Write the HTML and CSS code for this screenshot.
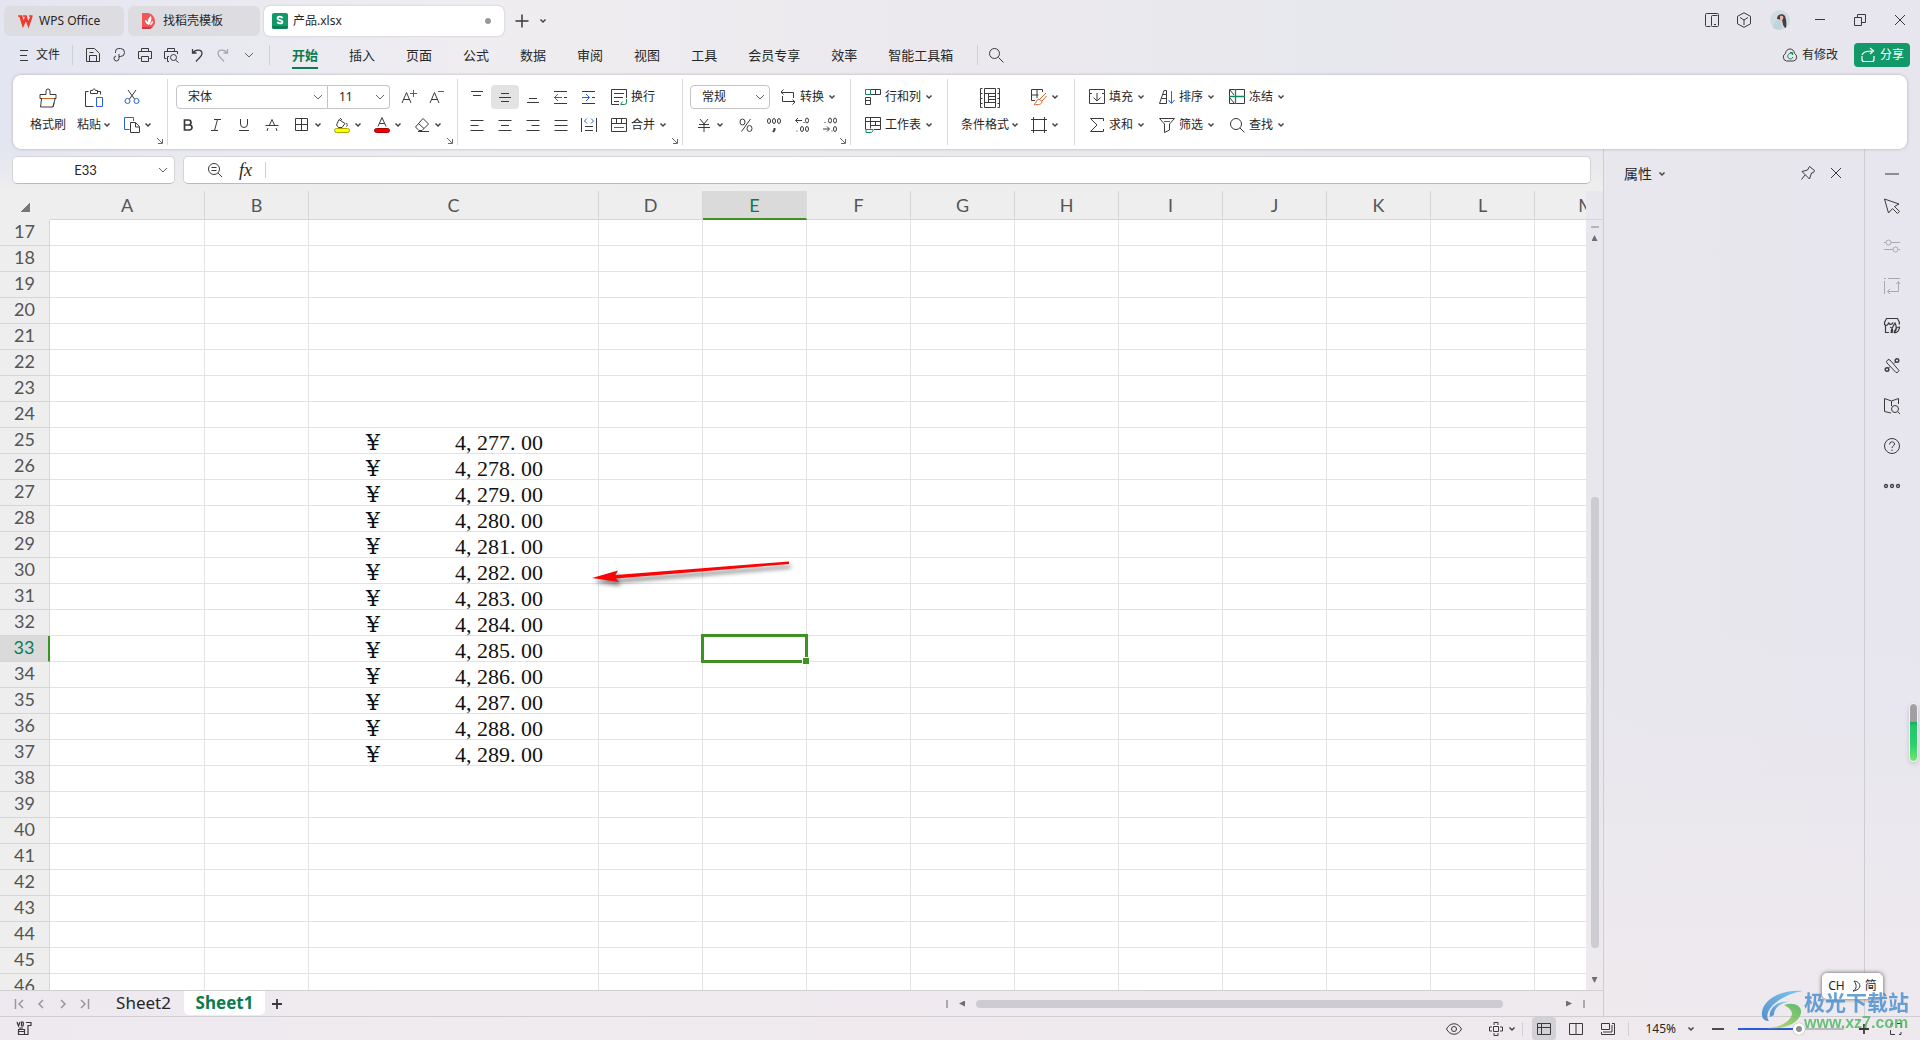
FILE: index.html
```html
<!DOCTYPE html>
<html lang="zh-CN">
<head>
<meta charset="utf-8">
<title>产品.xlsx - WPS Office</title>
<link rel="stylesheet" href="styles.css">
</head>
<body>
<svg width="0" height="0" class="defs" aria-hidden="true">
  <symbol id="chev" viewBox="0 0 8 8"><path d="M1.500 2.500 4 5l2.500-2.500" fill="none" stroke="currentColor" stroke-width="1.500"/></symbol>
  <symbol id="wide" viewBox="0 0 10 8"><path d="M1 2l4 4 4-4" fill="none" stroke="currentColor"/></symbol>
  <symbol id="corner" viewBox="0 0 8 8"><path d="M1 1l5 5M6.500 2v4.500H2" fill="none" stroke="currentColor"/></symbol>
</svg>

<header class="titlebar">
  <nav class="doc-tabs">
    <button class="doc-tab t1"><svg class="ic" viewBox="0 0 16 16"><path d="M1 3h3.500l2 7L9 3M6 3h3l2 7 3.500-7H12M3 3l3 10 3-7 2.500 7 3.500-10" stroke="#f03a2e" stroke-width="1.600"/></svg>WPS Office</button>
    <button class="doc-tab t2"><svg class="ic" viewBox="0 0 16 16"><path d="M1 0h6a8 8 0 0 1 7 8 7 7 0 0 1-7 8H1z" fill="#f25757" stroke="none"/><path d="M1 14h11l-3 2H1z" fill="#c93c42" stroke="none"/><path d="M8 12C5 11 4 9 4 7c2 0 3 2 4 5zM8 12C6 8 7 5 10 3c1 3 0 6-2 9zM9 12c1-3 2-4 3-4 0 2-1 4-3 4z" fill="#fff" stroke="none"/></svg>找稻壳模板</button>
    <button class="doc-tab active"><svg class="ic" viewBox="0 0 16 16"><rect width="16" height="16" rx="2" fill="#12996a" stroke="none"/><path d="M0 13h16v1a2 2 0 0 1-2 2H2a2 2 0 0 1-2-2z" fill="#0c7f56" stroke="none"/><path d="M10.500 5.200C9.500 3 5.500 3.200 5.500 5.300c0 2.300 5 1.200 5 3.500 0 2.200-4.200 2.200-5.200 0" stroke="#fff" stroke-width="1.800"/></svg>产品.xlsx<span class="unsaved"></span></button>
    <button class="icon-btn plus" aria-label="新建"><svg class="ic" viewBox="0 0 16 16"><path d="M8 1.500v13M1.500 8h13" stroke-width="1.500"/></svg></button>
    <button class="icon-btn tiny" aria-label="标签列表"><svg class="chev"><use href="#chev"/></svg></button>
  </nav>
  <div class="win-tools">
    <button class="icon-btn w32" aria-label="侧栏"><svg class="ic" viewBox="0 0 16 16"><path d="M6.500 14.500h-4a1 1 0 0 1-1-1v-11a1 1 0 0 1 1-1h11a1 1 0 0 1 1 1v11a1 1 0 0 1-1 1h-5a1 1 0 0 1-1-1v-9a1 1 0 0 1 1-1h5M10 12.500h2"/></svg></button>
    <button class="icon-btn w32" aria-label="应用"><svg class="ic" viewBox="0 0 16 16"><path d="M8 .8l6.500 3.500v7.500L8 15.300l-6.500-3.500V4.300zM4 5.500L8 8l4-2.500M8 8v5"/></svg></button>
    <button class="icon-btn w40" aria-label="账户"><svg class="avatar" viewBox="0 0 20 20"><circle cx="10" cy="10" r="10" fill="#cfdde2"/><path d="M3 18c0-6 4-9 8-8l1 9c-3 1-6 1-9-1z" fill="#bcd6da"/><path d="M7 9c0-5 6-6 8-3 1 3 2 7 1 12-3-1-3-4-4-8z" fill="#4a3c44"/><path d="M10 6c3-1 4 1 3 3-1 2-2 2-3 2z" fill="#e6b8a4"/></svg></button>
    <button class="icon-btn w40" aria-label="最小化"><svg class="ic" viewBox="0 0 16 16"><path d="M3 7.500h10"/></svg></button>
    <button class="icon-btn w40" aria-label="还原"><svg class="ic" viewBox="0 0 16 16"><path d="M2.500 5.500h7v8h-7zM5.500 5V2.500h8v8H10"/></svg></button>
    <button class="icon-btn w40" aria-label="关闭"><svg class="ic" viewBox="0 0 16 16"><path d="M3 3l10 10M13 3L3 13"/></svg></button>
  </div>
</header>

<div class="menubar">
  <button class="file-btn"><svg class="ic" viewBox="0 0 16 16"><path d="M4 3.500h8M4 8.500h7M4 13.500h8"/></svg>文件</button>
  <span class="vline v-file"></span>
  <div class="quick">
    <button class="icon-btn" aria-label="保存"><svg class="ic" viewBox="0 0 16 16"><path d="M1.500 14.500v-13h8l5 5v8zM4.500 14v-5.500h7V14M4.500 5.500h4"/></svg></button>
    <button class="icon-btn" aria-label="输出为PDF"><svg class="ic" viewBox="0 0 16 16"><path d="M4.500 6V4.500a3 3 0 0 1 3-3h2a4 4 0 0 1 0 8H8M8 7v4.500a2.500 2.500 0 1 1-3-2.500"/></svg></button>
    <button class="icon-btn" aria-label="打印"><svg class="ic" viewBox="0 0 16 16"><path d="M3.500 11.500h-2v-7h13v7h-2M4.500 4V1.500h7V4M4.500 9.500h7v5h-7z"/></svg></button>
    <button class="icon-btn" aria-label="打印预览"><svg class="ic" viewBox="0 0 16 16"><path d="M3.500 11.500h-2v-7h13V7M4.500 4V1.500h7V4M6 14.500H4.500v-5H6M12.500 13l3 2.500"/><circle cx="10.500" cy="10.500" r="3"/></svg></button>
    <button class="icon-btn" aria-label="撤销"><svg class="ic" viewBox="0 0 16 16"><path d="M3.500 2v4h4M4 6c2-4 9-4 9 .5 0 3-3 4-6 8" stroke-width="1.300"/></svg></button>
    <button class="icon-btn dim" aria-label="恢复"><svg class="ic" viewBox="0 0 16 16"><path d="M12.500 2v4h-4M12 6C10 2 3 2 3 6.500c0 3 3 4 6 8" stroke-width="1.300"/></svg></button>
    <button class="icon-btn" aria-label="更多"><svg class="wide"><use href="#wide"/></svg></button>
  </div>
  <span class="vline v-menu"></span>
  <nav class="menus">
    <a href="#" class="on">开始</a><a href="#">插入</a><a href="#">页面</a><a href="#">公式</a><a href="#">数据</a><a href="#">审阅</a><a href="#">视图</a><a href="#">工具</a><a href="#">会员专享</a><a href="#">效率</a><a href="#">智能工具箱</a>
  </nav>
  <span class="vline v-search"></span>
  <button class="icon-btn find" aria-label="搜索"><svg class="ic" viewBox="0 0 16 16"><circle cx="6.500" cy="6.500" r="5"/><path d="M10.500 10.500l5 5"/></svg></button>
  <div class="doc-state">
    <button class="changed"><svg class="ic" viewBox="0 0 16 16"><path d="M4.500 14a4 4 0 0 1-1-7.500C4 .5 12 .5 12.500 6.500a4 4 0 0 1-1 7.500z"/><path d="M10.500 7.500A2.700 2.700 0 1 0 11 10M8 5.500h2.500V8" stroke="#0e8a5c"/></svg>有修改</button>
    <button class="share"><svg class="ic" viewBox="0 0 16 16"><path d="M2 9v3.500a2 2 0 0 0 2 2h8a2 2 0 0 0 2-2V9M2 8c1-3 4-4 10-4M10 1l3.500 3L10 7" stroke="#fff" stroke-width="1.200"/></svg>分享</button>
  </div>
</div>

<section class="ribbon">
  <div class="group g-clip">
    <button class="big"><svg class="ic x20" viewBox="0 0 20 20"><path d="M8 6.500V3a2 2 0 0 1 4 0v3.500h6v4H2v-4zM3.500 11l-1 8h12.500l2-8M15 19l1-4"/><path d="M4 10.500h12" stroke="#d9652b"/></svg><span>格式刷</span></button>
    <button class="big"><svg class="ic x20" viewBox="0 0 20 20"><path d="M4.500 3.500H1.500v15h8M13.500 3.500h3v3M6.500 5.500v-3h2c0-2 3-2 3 0h2v3z"/><path d="M12.500 9.500h6v9h-6z" stroke="#2c5fdc"/></svg><span>粘贴<svg class="chev"><use href="#chev"/></svg></span></button>
    <div class="rows">
      <div class="row"><button class="pick" aria-label="剪切"><svg class="ic" viewBox="0 0 16 16"><path d="M4 1l6.500 9M12 1L5.500 10"/><g stroke="#2c5fdc"><circle cx="3.500" cy="12" r="2.500"/><circle cx="12.500" cy="12" r="2.500"/></g></svg></button></div>
      <div class="row"><button class="pick" aria-label="复制"><svg class="ic" viewBox="0 0 16 16"><path d="M9.500 4V.5h-9v12h5" stroke="#2c5fdc"/><path d="M6.500 5.500h5l4 4v6h-9zM11.500 6v4h4"/></svg><svg class="chev"><use href="#chev"/></svg></button></div>
    </div>
    <svg class="launch"><use href="#corner"/></svg>
  </div>

  <div class="group g-font">
    <div class="rows">
      <div class="row r-combo">
        <label class="combo c-font"><select aria-label="字体"><option>宋体</option></select><svg class="wide"><use href="#wide"/></svg></label>
        <label class="combo c-size"><select aria-label="字号"><option>11</option></select><svg class="wide"><use href="#wide"/></svg></label>
        <button class="icon-btn w28 grow" aria-label="增大字号"><svg class="ic" viewBox="0 0 16 16"><path d="M1 14L5.500 3.500 10 14M2.500 10.500h6"/><path d="M12.500 1v7M9 4.500h7" stroke="#2c5fdc"/></svg></button>
        <button class="icon-btn w28" aria-label="减小字号"><svg class="ic" viewBox="0 0 16 16"><path d="M1 14L5.500 3.500 10 14M2.500 10.500h6"/><path d="M9 2.500h6" stroke="#2c5fdc"/></svg></button>
      </div>
      <div class="row">
        <button class="icon-btn w28" aria-label="加粗"><svg class="ic" viewBox="0 0 16 16"><path d="M4.500 3h4a2.400 2.400 0 0 1 0 5h-4zM4.500 8h5a2.500 2.500 0 0 1 0 5h-5z" stroke-width="1.700"/></svg></button>
        <button class="icon-btn w28" aria-label="倾斜"><svg class="ic" viewBox="0 0 16 16"><path d="M6 2.500h7M3 13.500h7M9.500 2.500l-3 11"/></svg></button>
        <button class="icon-btn w28" aria-label="下划线"><svg class="ic" viewBox="0 0 16 16"><path d="M4.500 2v5a3.500 3.500 0 0 0 7 0V2M3 13.500h10"/></svg></button>
        <button class="icon-btn w28" aria-label="删除线"><svg class="ic" viewBox="0 0 16 16"><path d="M1.500 8.500h13M5.500 8L8 2.500 10.500 8M4 11l-1 3M12 11l1 3"/></svg></button>
        <button class="pick" aria-label="边框"><svg class="ic" viewBox="0 0 16 16"><path d="M1.500 1.500h12v12h-12zM7.500 1.500v12M1.500 7.500h12"/></svg><svg class="chev"><use href="#chev"/></svg></button>
        <button class="pick" aria-label="填充颜色"><svg class="ic" viewBox="0 0 16 16"><path d="M5 2.500l6 4-3 4H4.500l-2-2.500zM6 1l2 2M12.500 6c1 2 1 3 0 3.500"/><rect x=".5" y="11.500" width="15" height="4" rx="2" fill="#ffff00" stroke="#a8a800"/></svg><svg class="chev"><use href="#chev"/></svg></button>
        <button class="pick" aria-label="字体颜色"><svg class="ic" viewBox="0 0 16 16"><path d="M4 9.500L8 .5l4 9M5.500 6.500h5"/><rect x=".5" y="11.500" width="15" height="4" rx="2" fill="#f00000" stroke="#b00000"/></svg><svg class="chev"><use href="#chev"/></svg></button>
        <button class="pick" aria-label="清除"><svg class="ic" viewBox="0 0 16 16"><path d="M9 1.500l5.500 5.500-6.500 6.500H5L1.500 10zM4.500 6.500l5.500 5M4 14.500h11"/></svg><svg class="chev"><use href="#chev"/></svg></button>
      </div>
    </div>
    <svg class="launch"><use href="#corner"/></svg>
  </div>

  <div class="group g-align">
    <div class="rows">
      <div class="row">
        <button class="icon-btn w28" aria-label="顶端对齐"><svg class="ic" viewBox="0 0 16 16"><path d="M2 2.500h12M4 6.500h8"/></svg></button>
        <button class="icon-btn w28 pressed" aria-label="垂直居中"><svg class="ic" viewBox="0 0 16 16"><path d="M4 4.500h8M2 8.500h12M4 12.500h8"/></svg></button>
        <button class="icon-btn w28" aria-label="底端对齐"><svg class="ic" viewBox="0 0 16 16"><path d="M4 9.500h8M2 13.500h12"/></svg></button>
        <button class="icon-btn w28" aria-label="减少缩进"><svg class="ic" viewBox="0 0 16 16"><path d="M1 2.500h13M1 14.500h13M11 8.500h3"/><path d="M9 8.500H1.500M5 5L1.500 8.500 5 12" stroke="#2c5fdc"/></svg></button>
        <button class="icon-btn w28" aria-label="增加缩进"><svg class="ic" viewBox="0 0 16 16"><path d="M1 2.500h13M1 14.500h13M11 8.500h3"/><path d="M1 8.500h7.500M5 5l3.500 3.500L5 12" stroke="#2c5fdc"/></svg></button>
        <button class="cmd"><svg class="ic" viewBox="0 0 16 16"><path d="M8 15.500H.5V.5h15V9M3 4.500h10M3 8.500h9M3 12.500h5"/><path d="M15.500 10v3.500a2 2 0 0 1-2 2H10M11.500 12.500l-2 3" stroke="#0e8a5c"/></svg>换行</button>
      </div>
      <div class="row">
        <button class="icon-btn w28" aria-label="左对齐"><svg class="ic" viewBox="0 0 16 16"><path d="M1.500 3.500h13M1.500 8.500h8M1.500 13.500h13"/></svg></button>
        <button class="icon-btn w28" aria-label="水平居中"><svg class="ic" viewBox="0 0 16 16"><path d="M1.500 3.500h13M4 8.500h8M1.500 13.500h13"/></svg></button>
        <button class="icon-btn w28" aria-label="右对齐"><svg class="ic" viewBox="0 0 16 16"><path d="M1.500 3.500h13M6.500 8.500h8M1.500 13.500h13"/></svg></button>
        <button class="icon-btn w28" aria-label="两端对齐"><svg class="ic" viewBox="0 0 16 16"><path d="M1.500 3.500h13M1.500 8.500h13M1.500 13.500h13"/></svg></button>
        <button class="icon-btn w28" aria-label="分散对齐"><svg class="ic" viewBox="0 0 16 16"><path d="M.5 1v14M15.500 1v14M4 9.500h8M4 13.500h8"/><path d="M6 1.500L3.500 4 6 6.500M10 1.500L12.500 4 10 6.500" stroke="#2c5fdc"/></svg></button>
        <button class="cmd"><svg class="ic" viewBox="0 0 16 16"><path d="M.5 1.500h15v13H.5zM.5 6.500h15M5.500 1.500v5M10.500 1.500v5"/><path d="M3 10.500h10" stroke="#0e8a5c"/></svg>合并<svg class="chev"><use href="#chev"/></svg></button>
      </div>
    </div>
    <svg class="launch"><use href="#corner"/></svg>
  </div>

  <div class="group g-num">
    <div class="rows">
      <div class="row r-num">
        <label class="combo c-fmt"><select aria-label="数字格式"><option>常规</option></select><svg class="wide"><use href="#wide"/></svg></label>
        <button class="cmd conv"><svg class="ic" viewBox="0 0 16 16"><path d="M3.500 .5L1 3l2.500 2.500M1 3.500h12.500V9M12.500 10.500L15 13l-2.500 2.500M15 12.500H2.500V7"/></svg>转换<svg class="chev"><use href="#chev"/></svg></button>
      </div>
      <div class="row">
        <button class="pick" aria-label="货币"><svg class="ic" viewBox="0 0 16 16"><path d="M4 2l4 5 4-5M3 7.500h10M2 10.500h12M8 7v8"/></svg><svg class="chev"><use href="#chev"/></svg></button>
        <button class="icon-btn w28 pct" aria-label="百分比"><svg class="ic" viewBox="0 0 16 16"><path d="M12.500 2l-9 12.500"/><ellipse cx="4.500" cy="5" rx="2.500" ry="3"/><ellipse cx="11.500" cy="11.500" rx="2.500" ry="3"/></svg></button>
        <button class="icon-btn w28" aria-label="千位分隔"><svg class="ic" viewBox="0 0 16 16"><ellipse cx="3" cy="4" rx="1.500" ry="2.500"/><ellipse cx="8" cy="4" rx="1.500" ry="2.500"/><ellipse cx="13" cy="4" rx="1.500" ry="2.500"/><path d="M8.500 11v2l-1.500 2" stroke-width="2"/></svg></button>
        <button class="icon-btn w28" aria-label="增加小数位"><svg class="ic" viewBox="0 0 16 16"><path d="M8 3.500H2M4 1L1.500 3.500 4 6M9.500 5.500h1M2.500 14h1"/><ellipse cx="13" cy="3.500" rx="1.500" ry="2.500"/><ellipse cx="8" cy="12" rx="1.500" ry="2.500"/><ellipse cx="13" cy="12" rx="1.500" ry="2.500"/></svg></button>
        <button class="icon-btn w28" aria-label="减少小数位"><svg class="ic" viewBox="0 0 16 16"><path d="M1 12h6M5 9.500L7.500 12 5 14.500M9.500 14h1M2.500 5.500h1"/><ellipse cx="13" cy="12" rx="1.500" ry="2.500"/><ellipse cx="8" cy="3.500" rx="1.500" ry="2.500"/><ellipse cx="13" cy="3.500" rx="1.500" ry="2.500"/></svg></button>
      </div>
    </div>
    <svg class="launch"><use href="#corner"/></svg>
  </div>

  <div class="group g-rc">
    <div class="rows">
      <div class="row"><button class="cmd"><svg class="ic" viewBox="0 0 16 16"><path d="M5.500 .5h10v5h-10M10.500 .5v5M5.500 8.500v7h-5v-7zM.5 11.500h5"/><path d="M.5 .5h5v5h-5z" stroke="#0e8a5c"/></svg>行和列<svg class="chev"><use href="#chev"/></svg></button></div>
      <div class="row"><button class="cmd"><svg class="ic" viewBox="0 0 16 16"><path d="M9 12.500h6.500V.5H.5v12M.5 4.500h15M5.500 .5v11M10.500 4.500V8M5.500 8.500h10"/><path d="M1 12.500h7c0 2-1 3-3 3H1z" stroke="#0e8a5c"/></svg>工作表<svg class="chev"><use href="#chev"/></svg></button></div>
    </div>
  </div>

  <div class="group g-cond">
    <button class="big"><svg class="ic x20" viewBox="0 0 20 20"><path d="M2.500 .5H.5v19h2M17.500 .5h2v19h-2M4.500 .5v19M15.500 .5v19M4.500 .5h11M4.500 5.500h11M4.500 14.500h11M4.500 19.500h11M8.500 8.500h7M8.500 11.500h7M8.500 5.500v9M.5 5.500h2M.5 10.500h2M.5 15.500h2M17.500 5.500h2M17.500 10.500h2M17.500 15.500h2"/></svg><span>条件格式<svg class="chev"><use href="#chev"/></svg></span></button>
    <div class="rows">
      <div class="row"><button class="pick" aria-label="表格样式"><svg class="ic" viewBox="0 0 16 16"><path d="M4 11.500H.5V.5h11V3M.5 6h7M6 .5V9"/><path d="M15 4L9 10M15.500 7L11 12M8 10c-3 0-2 4-5 5.500 4 .5 8 0 8-3z" stroke="#d9652b"/></svg><svg class="chev"><use href="#chev"/></svg></button></div>
      <div class="row"><button class="pick" aria-label="单元格"><svg class="ic" viewBox="0 0 16 16"><path d="M2.500 0v16M13.500 0v16M0 2.500h16M0 13.500h16"/></svg><svg class="chev"><use href="#chev"/></svg></button></div>
    </div>
  </div>

  <div class="group g-edit">
    <div class="rows">
      <div class="row">
        <button class="cmd w70"><svg class="ic" viewBox="0 0 16 16"><path d="M3 4.500H.5v-4h15v4H13M.5 4.500v10h15v-10M8 4v8M4.500 8.500L8 12l3.500-3.500"/></svg>填充<svg class="chev"><use href="#chev"/></svg></button>
        <button class="cmd w70"><svg class="ic" viewBox="0 0 16 16"><path d="M.5 14.500L5 1.500h2.500v13zM4 5.500h3.500M2.500 9.500h5"/><path d="M12.500 2v12M9.500 11l3 3.500 3-3.500" stroke="#2c5fdc"/></svg>排序<svg class="chev"><use href="#chev"/></svg></button>
        <button class="cmd w70"><svg class="ic" viewBox="0 0 16 16"><path d="M.5 .5h15v14H.5zM1 1l4 5M1 9l4 5"/><path d="M0 7.500h16M6.500 0v15" stroke="#0e8a5c" stroke-width="1.300"/></svg>冻结<svg class="chev"><use href="#chev"/></svg></button>
      </div>
      <div class="row">
        <button class="cmd w70"><svg class="ic" viewBox="0 0 16 16"><path d="M14.500 4V1.500h-13L8 8l-6.500 6.500h13V12"/></svg>求和<svg class="chev"><use href="#chev"/></svg></button>
        <button class="cmd w70"><svg class="ic" viewBox="0 0 16 16"><path d="M.5 1.500h15L10.500 7v6l-5 2.500V7z"/><path d="M5 4.500h6" stroke="#0e8a5c"/></svg>筛选<svg class="chev"><use href="#chev"/></svg></button>
        <button class="cmd w70"><svg class="ic" viewBox="0 0 16 16"><circle cx="7" cy="7" r="5.500"/><path d="M11 11l4.500 4.500"/></svg>查找<svg class="chev"><use href="#chev"/></svg></button>
      </div>
    </div>
  </div>
</section>

<main class="body">
  <section class="work">
    <div class="formula">
      <div class="name-box"><input aria-label="名称框" value="E33"><svg class="wide"><use href="#wide"/></svg></div>
      <div class="fx-box">
        <svg class="ic" viewBox="0 0 16 16"><circle cx="7" cy="7" r="5.500"/><path d="M11 11l4 4M4.500 5.500h5M4.500 8.500h5"/></svg>
        <span class="fx">fx</span>
        <input aria-label="编辑栏">
      </div>
    </div>
    <div class="sheet-area">
      <div class="grid-wrap">
        <table class="grid">
          <colgroup><col class="c-head"><col class="c-a"><col class="c-b"><col class="c-c"><col class="c-n" span="10"></colgroup>
          <thead><tr><th><span class="all"></span></th><th>A</th><th>B</th><th>C</th><th>D</th><th class="sel">E</th><th>F</th><th>G</th><th>H</th><th>I</th><th>J</th><th>K</th><th>L</th><th>M</th></tr></thead>
          <tbody>
<tr><th>17<td><td><td><td><td><td><td><td><td><td><td><td><td>
<tr><th>18<td><td><td><td><td><td><td><td><td><td><td><td><td>
<tr><th>19<td><td><td><td><td><td><td><td><td><td><td><td><td>
<tr><th>20<td><td><td><td><td><td><td><td><td><td><td><td><td>
<tr><th>21<td><td><td><td><td><td><td><td><td><td><td><td><td>
<tr><th>22<td><td><td><td><td><td><td><td><td><td><td><td><td>
<tr><th>23<td><td><td><td><td><td><td><td><td><td><td><td><td>
<tr><th>24<td><td><td><td><td><td><td><td><td><td><td><td><td>
<tr><th>25<td><td><td><div class="money"><b>¥</b><span>4<i>,</i>277<i>.</i>00</span></div><td><td><td><td><td><td><td><td><td><td>
<tr><th>26<td><td><td><div class="money"><b>¥</b><span>4<i>,</i>278<i>.</i>00</span></div><td><td><td><td><td><td><td><td><td><td>
<tr><th>27<td><td><td><div class="money"><b>¥</b><span>4<i>,</i>279<i>.</i>00</span></div><td><td><td><td><td><td><td><td><td><td>
<tr><th>28<td><td><td><div class="money"><b>¥</b><span>4<i>,</i>280<i>.</i>00</span></div><td><td><td><td><td><td><td><td><td><td>
<tr><th>29<td><td><td><div class="money"><b>¥</b><span>4<i>,</i>281<i>.</i>00</span></div><td><td><td><td><td><td><td><td><td><td>
<tr><th>30<td><td><td><div class="money"><b>¥</b><span>4<i>,</i>282<i>.</i>00</span></div><td><td><td><td><td><td><td><td><td><td>
<tr><th>31<td><td><td><div class="money"><b>¥</b><span>4<i>,</i>283<i>.</i>00</span></div><td><td><td><td><td><td><td><td><td><td>
<tr><th>32<td><td><td><div class="money"><b>¥</b><span>4<i>,</i>284<i>.</i>00</span></div><td><td><td><td><td><td><td><td><td><td>
<tr><th class="sel">33<td><td><td><div class="money"><b>¥</b><span>4<i>,</i>285<i>.</i>00</span></div><td><td class="cursor"><td><td><td><td><td><td><td><td>
<tr><th>34<td><td><td><div class="money"><b>¥</b><span>4<i>,</i>286<i>.</i>00</span></div><td><td><td><td><td><td><td><td><td><td>
<tr><th>35<td><td><td><div class="money"><b>¥</b><span>4<i>,</i>287<i>.</i>00</span></div><td><td><td><td><td><td><td><td><td><td>
<tr><th>36<td><td><td><div class="money"><b>¥</b><span>4<i>,</i>288<i>.</i>00</span></div><td><td><td><td><td><td><td><td><td><td>
<tr><th>37<td><td><td><div class="money"><b>¥</b><span>4<i>,</i>289<i>.</i>00</span></div><td><td><td><td><td><td><td><td><td><td>
<tr><th>38<td><td><td><td><td><td><td><td><td><td><td><td><td>
<tr><th>39<td><td><td><td><td><td><td><td><td><td><td><td><td>
<tr><th>40<td><td><td><td><td><td><td><td><td><td><td><td><td>
<tr><th>41<td><td><td><td><td><td><td><td><td><td><td><td><td>
<tr><th>42<td><td><td><td><td><td><td><td><td><td><td><td><td>
<tr><th>43<td><td><td><td><td><td><td><td><td><td><td><td><td>
<tr><th>44<td><td><td><td><td><td><td><td><td><td><td><td><td>
<tr><th>45<td><td><td><td><td><td><td><td><td><td><td><td><td>
<tr><th>46<td><td><td><td><td><td><td><td><td><td><td><td><td>
          </tbody>
        </table>
        <svg class="arrow" viewBox="0 0 210 50"><path d="M2 28L28 20.500 25.500 25 199 11.500V14L26 28.500 29 32z" fill="#fa0505"/></svg>
      </div>
      <div class="vscroll"><span class="split-h"></span><span class="tri up"></span><span class="v-thumb"></span><span class="tri down"></span></div>
    </div>
    <div class="sheet-bar">
      <div class="nav">
        <button aria-label="第一个"><svg class="ic" viewBox="0 0 16 16"><path d="M4.500 3v10M12 4L8 8l4 4" stroke-width="1.500"/></svg></button>
        <button aria-label="上一个"><svg class="ic" viewBox="0 0 16 16"><path d="M10 4L6 8l4 4" stroke-width="1.500"/></svg></button>
        <button aria-label="下一个"><svg class="ic" viewBox="0 0 16 16"><path d="M6 4l4 4-4 4" stroke-width="1.500"/></svg></button>
        <button aria-label="最后一个"><svg class="ic" viewBox="0 0 16 16"><path d="M11.500 3v10M4 4l4 4-4 4" stroke-width="1.500"/></svg></button>
      </div>
      <button class="sheet">Sheet2</button>
      <button class="sheet current">Sheet1</button>
      <button class="add" aria-label="新建工作表"><svg class="ic" viewBox="0 0 16 16"><path d="M8 3v10M3 8h10" stroke-width="1.800"/></svg></button>
      <div class="hscroll"><span class="split-v"></span><span class="tri left"></span><span class="h-track"><span class="h-thumb"></span></span><span class="tri right"></span><span class="split-v"></span></div>
    </div>
  </section>

  <aside class="props">
    <div class="props-head"><button class="props-title">属性<svg class="chev"><use href="#chev"/></svg></button>
      <button class="icon-btn w28" aria-label="固定"><svg class="ic" viewBox="0 0 16 16"><path d="M9.500 1.500l5 4-1 2-2 .5-2 6-7.500-7.500 5.500-1.500zM5 10l-3.500 4.500"/></svg></button>
      <button class="icon-btn w28" aria-label="关闭属性"><svg class="ic" viewBox="0 0 16 16"><path d="M3 3l10 10M13 3L3 13"/></svg></button>
    </div>
  </aside>

  <aside class="rail">
    <span class="rail-dash"></span>
    <button aria-label="选择"><svg class="ic" viewBox="0 0 16 16"><path d="M.5 1l14.500 5-4.500 2.500 5 5-2 2-5-5L4.500 15z"/></svg></button>
    <button class="dim" aria-label="设置"><svg class="ic" viewBox="0 0 16 16"><path d="M0 4.500h2M7 4.500h9M0 11.500h9M14 11.500h2"/><circle cx="4.500" cy="4.500" r="2.500"/><circle cx="11.500" cy="11.500" r="2.500"/></svg></button>
    <button class="dim" aria-label="转换"><svg class="ic" viewBox="0 0 16 16"><path d="M0 .5h2M4 .5h12M.5 3v13M14.500 4v9.500h-11M12 6l2.500-2.500L16 6M6 11l-2.500 2.500L6 16"/></svg></button>
    <button aria-label="素材"><svg class="ic" viewBox="0 0 16 16"><path d="M1.500 7v7.500H5M15 6.500l.5-2L13.500.5h-11l-2 4v2c2 2 4 0 4-2 1 3 4 2 4.500 0M6 9c3 1 3 4 2 6M7 15c0-5 3-8 4-10 2 4 1 8-1 10M10 15c1-4 3-6 5.500-6 0 3-2 6-5.500 6" stroke-width="1.200"/></svg></button>
    <button aria-label="工具"><svg class="ic" viewBox="0 0 16 16"><path d="M2.500 3.500l1.500-2 2 .5 9 10.500-1.500 2H12L3 5z"/><circle cx="13" cy="2.500" r="1.800" stroke-width="1.400"/><circle cx="3" cy="11.500" r="1.800" stroke-width="1.400"/><path d="M10 5.500l1.500-1.500M4.500 10L6 8.500"/></svg></button>
    <button aria-label="查阅"><svg class="ic" viewBox="0 0 16 16"><path d="M7 15l-6.500-1.500V.5L7.500 3l7-2.500V6M7.500 3v5M14 14l2 2"/><circle cx="11" cy="11" r="3.500"/></svg></button>
    <button aria-label="帮助"><svg class="ic" viewBox="0 0 16 16"><circle cx="8" cy="8" r="7.500"/><path d="M5.500 6.500c0-3.500 5-3.500 5-.5 0 2-2.500 2-2.500 4M8 11.500v1.500"/></svg></button>
    <button aria-label="更多"><svg class="ic" viewBox="0 0 16 16"><g stroke-width="1.300"><circle cx="2" cy="8" r="1.500"/><circle cx="8" cy="8" r="1.500"/><circle cx="14" cy="8" r="1.500"/></g></svg></button>
  </aside>
</main>

<footer class="status">
  <button class="icon-btn vbt" aria-label="宏"><svg class="ic" viewBox="0 0 16 16"><path d="M1 1l1.500 4L4 1M5.500 1v4H7L7.500 3 7 1zM10 1.500h5v3h-3v9H2.500V8.500h6v5M3 10.500h5M4 8.500V7h3" stroke-width="1.200"/></svg></button>
  <div class="status-r">
    <button class="icon-btn eye" aria-label="护眼"><svg class="ic" viewBox="0 0 16 16"><path d="M.5 8C4 1 12 1 15.500 8 12 15 4 15 .5 8z"/><circle cx="8" cy="8" r="2.500"/></svg></button>
    <button class="pick" aria-label="阅读模式"><svg class="ic" viewBox="0 0 16 16"><path d="M6 4V1.500h4V4M6 12v2.500h4V12M4 6H1.500v4H4M12 6h2.500v4H12M5.500 5.500h5v5h-5z"/></svg><svg class="chev"><use href="#chev"/></svg></button>
    <span class="vline v-a"></span>
    <button class="icon-btn view pressed" aria-label="普通视图"><svg class="ic" viewBox="0 0 16 16"><path d="M1.500 2.500h13v11h-13zM5.500 2.500v11M1.500 6.500h13"/></svg></button>
    <button class="icon-btn view" aria-label="分页预览"><svg class="ic" viewBox="0 0 16 16"><path d="M1.500 2.500h13v11h-13zM8 2.500v11"/></svg></button>
    <button class="icon-btn view" aria-label="页面布局"><svg class="ic" viewBox="0 0 16 16"><path d="M1.500 2.500h8v6h-8zM12 2.500h2.500v11h-13V11M12 4v7H3"/></svg></button>
    <span class="vline v-b"></span>
    <button class="zoom">145%<svg class="chev"><use href="#chev"/></svg></button>
    <button class="icon-btn minus" aria-label="缩小"><svg class="ic" viewBox="0 0 16 16"><path d="M2 8h12" stroke-width="1.800"/></svg></button>
    <input class="range" type="range" min="0" max="100" value="58" aria-label="缩放比例">
    <button class="icon-btn zplus" aria-label="放大"><svg class="ic" viewBox="0 0 16 16"><path d="M3 8h10M8 3v10" stroke-width="1.800"/></svg></button>
    <button class="icon-btn" aria-label="全屏"><svg class="ic" viewBox="0 0 16 16"><path d="M9 2.500h4.500V7M2.500 9v4.500H7M13 11v2.500h-2M3 5V2.500h2"/></svg></button>
  </div>
</footer>

<div class="meter"></div>
<div class="ime">CH <svg viewBox="0 0 12 12"><path d="M5 1c8 1 8 9-1 10 4-2 4-6 1-10z" fill="none" stroke="#333"/></svg> 简</div>
<div class="mark">
  <svg viewBox="0 0 44 42">
    <defs><linearGradient id="wb" x1="0" y1="1" x2="1" y2="0"><stop offset="0" stop-color="#3f7fc4"/><stop offset="1" stop-color="#69c3f3"/></linearGradient><linearGradient id="wg" x1="0" y1="1" x2="1" y2="0"><stop offset="0" stop-color="#c5d655"/><stop offset="1" stop-color="#42b45c"/></linearGradient></defs>
    <path d="M43 2C22 0 4 10 2 23c-1 6 2 9 7 9C2 23 18 6 43 2z" fill="url(#wb)"/>
    <path d="M10 28c-2-9 9-17 19-15-8 0-15 6-15 13z" fill="url(#wb)"/>
    <path d="M24 16c9-3 18 0 17 8-2 10-16 17-35 15 14 0 25-7 26-14 0-4-4-7-8-9z" fill="url(#wg)"/>
  </svg>
  <div><strong>极光下载站</strong><em>www.xz7.com</em></div>
</div>
</body>
</html>
```
FILE: styles.css
```css
* { box-sizing: border-box; }
body {
  margin: 0;
  height: 100vh;
  display: flex;
  flex-direction: column;
  overflow: hidden;
  position: relative;
  font: 12px/16px "Noto Sans", "Noto Sans CJK SC", sans-serif;
  color: #262626;
  background:
    linear-gradient(to bottom, transparent 60%, rgba(240, 234, 238, .8)),
    linear-gradient(to right, #e3e5f1, #efedf0 24%, #ece9ee 48%, #e7e8ed 70%, #e7e6ee);
}
button, input, select { font: inherit; color: inherit; margin: 0; padding: 0; border: 0; background: none; }
button { display: flex; align-items: center; justify-content: center; white-space: nowrap; flex: none; }
input:focus, select:focus { outline: none; }
svg { flex: none; display: block; }
.defs { position: absolute; }
.ic { width: 16px; height: 16px; fill: none; stroke: #3a3a3a; stroke-width: 1; overflow: visible; }
.x20 { width: 20px; height: 20px; }
.chev { width: 8px; height: 8px; color: #444; }
.wide { width: 10px; height: 8px; color: #666; }
.icon-btn { width: 26px; height: 24px; }
.w28 { width: 28px; }
.w32 { width: 32px; }
.w40 { width: 40px; }
.dim .ic { stroke: #a9a9ae; }
.vline { width: 1px; height: 20px; background: #cfcfd4; flex: none; }

/* title bar */
.titlebar { display: flex; justify-content: space-between; height: 40px; align-items: center; flex: none; }
.doc-tabs { display: flex; align-items: center; padding: 2px 0 0 4px; gap: 4px; }
.doc-tab { height: 30px; border-radius: 6px; background: #dddce1; padding: 0 13px; gap: 6px; justify-content: flex-start; }
.t1 { width: 120px; }
.t2 { width: 132px; }
.doc-tab.active { width: 240px; background: #fff; box-shadow: 0 0 2px #b5b5ba; padding: 0 13px 0 8px; gap: 5px; }
.unsaved { width: 6px; height: 6px; border-radius: 3px; background: #999; margin-left: auto; }
.plus { margin-left: 1px; }
.tiny { width: 8px; }
.win-tools { display: flex; align-items: center; }
.avatar { width: 20px; height: 20px; }

/* menu bar */
.menubar { display: flex; align-items: center; height: 30px; padding: 0 10px 0 16px; flex: none; }
.file-btn { gap: 4px; }
.v-file { margin: 0 7px 0 12px; }
.quick { display: flex; }
.v-menu { margin: 0 22px 0 7px; }
.menus { display: flex; gap: 31px; font-size: 13px; padding-top: 2px; }
.menus a { color: inherit; text-decoration: none; line-height: 24px; border-bottom: 2px solid transparent; }
.menus .on { color: #0b7a50; font-weight: bold; border-color: #0b7a50; }
.v-search { margin: 0 5px 0 24px; }
.doc-state { margin-left: auto; display: flex; gap: 16px; }
.changed { gap: 4px; }
.share { width: 56px; height: 24px; border-radius: 4px; background: #12996a; color: #fff; gap: 4px; }

/* ribbon */
.ribbon { margin: 5px 13px 0 13px; height: 74px; background: #fff; border-radius: 8px; box-shadow: 0 0 3px #a9a9b0; display: flex; padding: 4px 0; flex: none; position: relative; z-index: 2; }
.group { display: flex; border-right: 1px solid #d9d9dc; padding: 4px 0 6px; position: relative; flex: none; }
.g-clip { width: 155px; padding-left: 17px; }
.g-font { width: 290px; padding-left: 6px; }
.g-align { width: 225px; padding-left: 5px; }
.g-num { width: 168px; padding-left: 5px; }
.g-rc { width: 97px; padding-left: 6px; }
.g-cond { width: 127px; padding-left: 13px; }
.g-edit { border: 0; padding-left: 6px; }
.rows { display: flex; flex-direction: column; }
.row { display: flex; align-items: center; height: 28px; }
.r-combo, .r-num { padding-left: 2px; }
.big { flex-direction: column; justify-content: flex-start; padding-top: 5px; gap: 9px; margin-right: 11px; }
.g-clip .big + .rows { margin-left: -6px; }
.g-cond .big { margin-right: 4px; }
.big span { display: flex; align-items: center; gap: 2px; }
.pick { width: 40px; height: 24px; gap: 4px; justify-content: flex-start; padding-left: 8px; }
.cmd { height: 24px; gap: 4px; padding-left: 8px; justify-content: flex-start; }
.cmd.conv { padding-left: 10px; }
.w70 { width: 70px; }
.pct { margin-left: 4px; }
.grow { margin-left: 5px; }
.combo { display: grid; align-items: center; height: 24px; border: 1px solid #c4c4c8; border-radius: 4px; }
.combo select { grid-area: 1 / 1; appearance: none; width: 100%; height: 22px; padding-left: 11px; }
.combo svg { grid-area: 1 / 1; justify-self: end; margin-right: 4px; pointer-events: none; }
.c-font { width: 152px; border-radius: 4px 0 0 4px; }
.c-size { width: 62px; border-left: 0; border-radius: 0 4px 4px 0; }
.c-fmt { width: 80px; }
.launch { position: absolute; right: 3px; bottom: 0; width: 8px; height: 8px; color: #666; }
.pressed { background: #e3e3e4; border-radius: 4px; }

/* body */
.body { display: flex; flex: 1; min-height: 0; }
.work { flex: 1; min-width: 0; display: flex; flex-direction: column; border-right: 1px solid #cdcdd2; }
.formula { display: flex; gap: 8px; padding: 7px 12px 7px 12px; background: linear-gradient(to bottom, rgba(238, 238, 238, 0), #eee); }
.name-box, .fx-box { height: 28px; background: #fff; border: 1px solid #d3d3d8; border-bottom-color: #bbb; border-radius: 5px; display: flex; align-items: center; }
.name-box { width: 163px; padding: 0 6px 0 0; }
.name-box input { flex: 1; min-width: 0; text-align: center; font-family: Lato, sans-serif; font-size: 13px; }
.fx-box { flex: 1; padding-left: 23px; }
.fx { font: italic 18px/20px "Liberation Serif", serif; margin: 0 13px 0 16px; }
.fx-box input { flex: 1; height: 16px; border-left: 1px solid #cfcfd4; }
.sheet-area { flex: 1; min-height: 0; display: flex; border-bottom: 1px solid #d0d0d2; }
.grid-wrap { flex: 1; min-width: 0; overflow: hidden; position: relative; background: #fff; }
.grid { table-layout: fixed; width: 1639px; border-spacing: 0; }
.c-head { width: 50px; }
.c-a { width: 155px; }
.c-b { width: 104px; }
.c-c { width: 290px; }
.c-n { width: 104px; }
.grid th { background: #eee; color: #555; font: 18px/20px Lato, sans-serif; padding: 0 0 4px; border: 0 solid #d6d6d6; border-width: 0 1px 1px 0; }
.grid thead th { height: 29px; padding: 0; }
.grid thead th:first-child { border-color: transparent; }
.grid td { height: 26px; padding: 0; border: 0 solid #e3e3e3; border-width: 0 1px 1px 0; position: relative; }
.grid .sel { background: #dadada; color: #0b7a50; }
.grid thead .sel { border-bottom: 2px solid #3f9121; border-right-color: #dadada; }
.grid tbody .sel { border-right: 2px solid #3f9121; }
.all { display: block; width: 9px; height: 9px; margin: 4px 0 0 21px; background: linear-gradient(135deg, transparent 50%, #777 50%); }
.money { display: flex; justify-content: space-between; align-items: center; height: 25px; padding: 4px 55px 0 57px; font: 22px/21px "Liberation Serif", serif; color: #111; }
.money b { font: 22px/21px "DejaVu Serif", serif; }
.money i { display: inline-block; width: 11px; font-style: normal; }
.cursor::before { content: ""; position: absolute; inset: -2px; border: 3px solid #3f9121; z-index: 1; }
.cursor::after { content: ""; position: absolute; right: -3px; bottom: -3px; width: 6px; height: 6px; background: #3f9121; outline: 1px solid #fff; z-index: 1; }
.arrow { position: absolute; left: 590px; top: 359px; width: 210px; height: 50px; filter: drop-shadow(2px 4px 2px rgba(0, 0, 0, .5)); }
.vscroll { width: 17px; margin-top: 28px; border-top: 1px solid #d6d6d6; display: flex; flex-direction: column; align-items: center; padding: 6px 0 7px; }
.split-h { width: 8px; height: 2px; background: #b5b5b9; }
.tri { width: 6px; height: 6px; background: #6e6e72; flex: none; }
.up { clip-path: polygon(50% 0, 100% 100%, 0 100%); margin-top: 7px; }
.down { clip-path: polygon(0 0, 100% 0, 50% 100%); }
.left { clip-path: polygon(100% 0, 100% 100%, 0 50%); }
.right { clip-path: polygon(0 0, 100% 50%, 0 100%); }
.v-thumb { width: 8px; height: 451px; border-radius: 4px; background: #cdccd2; margin: auto 0 29px; }

/* sheet tabs */
.sheet-bar { display: flex; height: 25px; flex: none; overflow: hidden; }
.nav { display: flex; padding-left: 11px; gap: 6px; }
.nav .ic { stroke: #97979c; }
.sheet { font: 17px/20px "Noto Sans", sans-serif; width: 81px; margin-left: 10px; height: 24px; }
.current { font-weight: bold; color: #0b7a50; background: #fff; border-radius: 0 0 5px 5px; margin-left: 0; }
.add { margin-left: 4px; }
.hscroll { margin-left: auto; width: 641px; padding-right: 2px; margin-right: 16px; display: flex; align-items: center; gap: 11px; }
.split-v { width: 2px; height: 8px; background: #a9a9ad; }
.h-track { flex: 1; height: 8px; }
.h-thumb { display: block; width: 91%; height: 8px; border-radius: 4px; background: #cdccd2; }

/* right panels */
.props { width: 261px; border-right: 1px solid #cdcdd2; }
.props-head { display: flex; align-items: center; padding: 12px 14px 0 20px; }
.props-title { font-size: 14px; line-height: 20px; padding-top: 2px; gap: 6px; margin-right: auto; }
.rail { width: 55px; display: flex; flex-direction: column; align-items: center; padding-right: 2px; }
.rail-dash { width: 14px; height: 2px; background: #8d8d92; margin: 24px 0 11px; }
.rail button { width: 40px; height: 40px; }

/* status bar */
.status { display: flex; justify-content: space-between; height: 24px; border-top: 1px solid #cdcdd2; flex: none; overflow: hidden; }
.status button { height: 23px; }
.vbt { margin-left: 11px; }
.status-r { display: flex; align-items: center; padding-right: 11px; }
.eye { margin-right: 13px; }
.v-a { margin: 0 9px 0 2px; height: 14px; }
.view { width: 24px; margin-right: 8px; }
.view.pressed { background: #d2d1d6; }
.v-b { height: 14px; margin: 0 16px 0 0; }
.zoom { gap: 11px; margin-right: 10px; }
.minus { margin-right: 7px; }
.range { appearance: none; width: 106px; height: 12px; background: linear-gradient(to right, #2b5bdb 57%, #b9b9c0 57%) center / 100% 2px no-repeat; }
.range::-webkit-slider-thumb { appearance: none; width: 12px; height: 12px; border-radius: 6px; background: #8f8f92; border: 3px solid #fff; box-shadow: 0 0 1px #777; }
.zplus { margin: 0 6px 0 7px; }

/* floating */
.meter { position: absolute; right: 2px; top: 703px; width: 9px; height: 59px; border-radius: 5px; border: 1px solid #f4f2f5; background: linear-gradient(to bottom, #a39ea2 18px, #19ab5c 18px, #21c76a 22px, #2bd06c 40px, #6ee86f); box-shadow: 0 2px 5px rgba(0, 0, 0, .15); }
.ime { position: absolute; right: 37px; bottom: 41px; width: 61px; height: 26px; background: #fff; border-radius: 5px; box-shadow: 0 0 4px #555; display: flex; align-items: center; justify-content: center; gap: 4px; font-size: 12px; }
.ime svg { width: 12px; height: 12px; }
.mark { position: absolute; right: 11px; bottom: 7px; display: flex; opacity: .85; pointer-events: none; }
.mark svg { width: 44px; height: 42px; }
.mark div { display: flex; flex-direction: column; }
.mark strong { font: bold 21px/24px "Noto Sans CJK SC", sans-serif; color: #4f90d0; }
.mark em { font: bold 16px/20px "Liberation Sans", sans-serif; color: #53b968; }
```
